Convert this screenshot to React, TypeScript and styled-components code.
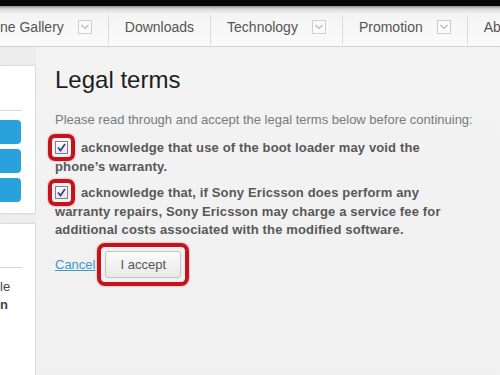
import React from "react";
import styled, { createGlobalStyle } from "styled-components";

const GlobalStyle = createGlobalStyle`
  html, body { margin: 0; padding: 0; }
  body {
    background: #ececec;
    font-family: "Liberation Sans", Arial, sans-serif;
    overflow: hidden;
  }
`;

const Page = styled.div`
  width: 500px;
  height: 375px;
  display: flex;
  flex-direction: column;
  overflow: hidden;
  background: #ededed;
`;

const TopStrip = styled.div`
  height: 6px;
  background: #050505;
  flex: none;
`;

const Nav = styled.nav`
  height: 40px;
  flex: none;
  display: flex;
  align-items: center;
  background: linear-gradient(to bottom, #8c8c8c 0px, #d8d8d8 3px, #f4f4f4 8px, #fbfbfb 100%);
  border-bottom: 1px solid #d2d2d2;
  white-space: nowrap;
  overflow: hidden;
`;

const NavItem = styled.div<{ $first?: boolean }>`
  display: flex;
  align-items: center;
  gap: 14px;
  padding: 2px 16px 0 ${(p) => (p.$first ? "0" : "16px")};
  font-size: 14px;
  color: #555;
  flex: none;
`;

const Separator = styled.div`
  width: 1px;
  height: 30px;
  align-self: flex-end;
  margin-bottom: 1px;
  background: #dcdcdc;
  flex: none;
`;

const DropIcon = () => (
  <svg width="14" height="14" viewBox="0 0 14 14">
    <rect x="0.5" y="0.5" width="13" height="13" fill="#fafafa" stroke="#cfcfcf" />
    <polyline points="3.5,5 7,8.5 10.5,5" fill="none" stroke="#b8b8b8" strokeWidth="1.2" />
  </svg>
);

const Body = styled.div`
  flex: 1;
  display: flex;
  min-height: 0;
`;

const Sidebar = styled.aside`
  width: 36px;
  flex: none;
  display: flex;
  flex-direction: column;
  gap: 9px;
  padding-top: 18px;
`;

const Panel = styled.div<{ $grow?: boolean }>`
  background: #fff;
  border: 1px solid #dcdcdc;
  border-left: none;
  ${(p) => (p.$grow ? "flex: 1; border-bottom: none;" : "height: 149px;")}
  box-sizing: border-box;
  display: flex;
  flex-direction: column;
  box-shadow: 1px 0 2px rgba(0, 0, 0, 0.05);
`;

const Rule = styled.div<{ $top: number }>`
  height: 1px;
  width: 22px;
  background: #d8d8d8;
  margin-top: ${(p) => p.$top}px;
`;

const BlueButtons = styled.div`
  display: flex;
  flex-direction: column;
  gap: 5px;
  margin-top: 9px;
`;

const BlueButton = styled.div`
  width: 21px;
  height: 24px;
  background: #29a2dc;
  border-radius: 0 4px 4px 0;
`;

const SideText = styled.div<{ $bold?: boolean }>`
  font-size: 13px;
  line-height: 18px;
  color: #444;
  font-weight: ${(p) => (p.$bold ? 700 : 400)};
`;

const SideTextBlock = styled.div`
  margin-top: 10px;
`;

const Main = styled.main`
  flex: 1;
  padding: 19px 0 0 19px;
  background: linear-gradient(to bottom, #f3f3f3, #f0f0f0);
`;

const Content = styled.div`
  width: 415px;
`;

const Heading = styled.h1`
  margin: 0;
  font-size: 24px;
  line-height: 28px;
  font-weight: 400;
  color: #1e1e1e;
`;

const Intro = styled.p`
  margin: 17px 0 0;
  font-size: 13px;
  line-height: 18px;
  color: #7a7a7a;
  white-space: nowrap;
`;

const Term = styled.p<{ $gap: number }>`
  margin: ${(p) => p.$gap}px 0 0;
  font-size: 13px;
  letter-spacing: 0.14px;
  line-height: 18.5px;
  font-weight: 700;
  color: #585858;
`;

const CheckWrap = styled.span`
  position: relative;
  display: inline-block;
  width: 13px;
  height: 13px;
  margin-right: 13px;
  vertical-align: -2px;
`;

const Box = styled.span`
  display: block;
  width: 13px;
  height: 13px;
  box-sizing: border-box;
  border: 1px solid #80808c;
  background: linear-gradient(to bottom, #fdfdfd, #e8e6ef);
`;

const Ring = styled.span<{ $inset: number; $radius: number }>`
  position: absolute;
  left: -${(p) => p.$inset}px;
  top: -${(p) => p.$inset}px;
  right: -${(p) => p.$inset}px;
  bottom: -${(p) => p.$inset}px;
  border: 4px solid #c5121c;
  border-radius: ${(p) => p.$radius}px;
  box-shadow: 0 0 2px rgba(150, 0, 0, 0.5);
  pointer-events: none;
`;

const Check = () => (
  <svg width="13" height="13" viewBox="0 0 13 13" style={{ position: "absolute", left: 0, top: 0 }}>
    <polyline points="3,6.5 5.5,9.5 10,3" fill="none" stroke="#3a3a90" strokeWidth="1.7" />
  </svg>
);

const Checkbox = () => (
  <CheckWrap>
    <Box />
    <Check />
    <Ring $inset={7} $radius={7} />
  </CheckWrap>
);

const Actions = styled.div`
  display: flex;
  align-items: center;
  gap: 10px;
  margin-top: 11px;
`;

const CancelLink = styled.a`
  font-size: 13px;
  color: #3a9cc6;
  text-decoration: underline;
  cursor: pointer;
`;

const ButtonWrap = styled.span`
  position: relative;
  display: inline-flex;
`;

const AcceptButton = styled.button`
  height: 27px;
  padding: 0 14px;
  border: 1px solid #c2c2c2;
  border-radius: 3px;
  background: linear-gradient(to bottom, #fbfbfb, #e9e9e9);
  font-family: "Liberation Sans", Arial, sans-serif;
  font-size: 13px;
  color: #555;
`;

export default function App() {
  return (
    <>
      <GlobalStyle />
      <Page>
        <TopStrip />
        <Nav>
          <NavItem $first>
            ne Gallery
            <DropIcon />
          </NavItem>
          <Separator />
          <NavItem>Downloads</NavItem>
          <Separator />
          <NavItem>
            Technology
            <DropIcon />
          </NavItem>
          <Separator />
          <NavItem>
            Promotion
            <DropIcon />
          </NavItem>
          <Separator />
          <NavItem>About</NavItem>
        </Nav>
        <Body>
          <Sidebar>
            <Panel>
              <Rule $top={44} />
              <BlueButtons>
                <BlueButton />
                <BlueButton />
                <BlueButton />
              </BlueButtons>
            </Panel>
            <Panel $grow>
              <Rule $top={43} />
              <SideTextBlock>
                <SideText>le</SideText>
                <SideText $bold>n</SideText>
              </SideTextBlock>
            </Panel>
          </Sidebar>
          <Main>
            <Content>
              <Heading>Legal terms</Heading>
              <Intro>Please read through and accept the legal terms below before continuing:</Intro>
              <Term $gap={10}>
                <Checkbox />
                acknowledge that use of the boot loader may void the phone’s warranty.
              </Term>
              <Term $gap={8}>
                <Checkbox />
                acknowledge that, if Sony Ericsson does perform any warranty repairs, Sony Ericsson may charge a service fee for additional costs associated with the modified software.
              </Term>
              <Actions>
                <CancelLink>Cancel</CancelLink>
                <ButtonWrap>
                  <AcceptButton>I accept</AcceptButton>
                  <Ring $inset={8} $radius={8} />
                </ButtonWrap>
              </Actions>
            </Content>
          </Main>
        </Body>
      </Page>
    </>
  );
}
